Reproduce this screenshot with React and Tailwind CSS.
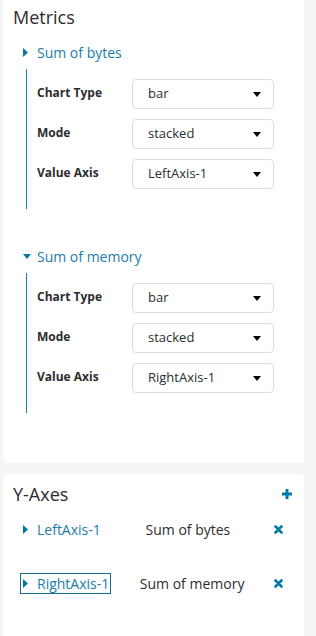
import React from "react";

const BLUE = "#0079a5";

function CaretRight() {
  return (
    <svg width="5" height="9" viewBox="0 0 5 9" className="shrink-0">
      <path d="M0 0 L5 4.5 L0 9 Z" fill={BLUE} />
    </svg>
  );
}
function CaretDown({ color = BLUE, w = 8, h = 5 }) {
  return (
    <svg width={w} height={h} viewBox="0 0 8 5" className="shrink-0">
      <path d="M0 0 L8 0 L4 5 Z" fill={color} />
    </svg>
  );
}
function PlusIcon() {
  return (
    <svg width="10" height="10" viewBox="0 0 10 10">
      <path d="M3.5 0h3v3.5H10v3H6.5V10h-3V6.5H0v-3h3.5z" fill={BLUE} />
    </svg>
  );
}
function TimesIcon() {
  return (
    <svg width="9" height="9" viewBox="0 0 9 9">
      <path d="M1.5 1.5 L7.5 7.5 M7.5 1.5 L1.5 7.5" stroke={BLUE} strokeWidth="2.6" strokeLinecap="round" />
    </svg>
  );
}

function Select({ value }) {
  return (
    <div className="w-[142px] h-[30px] border border-[#dcdcdc] rounded-[4px] bg-white flex items-center justify-between pl-[15px] pr-[12px] text-[13px] text-[#2d2d2d]">
      <span>{value}</span>
      <CaretDown color="#000" w={8} h={5} />
    </div>
  );
}

function Row({ label, value }) {
  return (
    <div className="flex items-center h-[30px]">
      <div className="w-[95px] text-[12px] font-bold text-[#2d2d2d] -mt-[2px]">{label}</div>
      <Select value={value} />
    </div>
  );
}

function Metric({ name, open, axis }) {
  return (
    <div>
      <div className="flex items-center h-[20px] pl-[20px]">
        <div className="w-[14px] flex items-center">
          {open ? <CaretDown /> : <CaretRight />}
        </div>
        <span className="text-[14px] text-[#1a7daa]">{name}</span>
      </div>
      <div className="ml-[23px] mt-[7px] border-l border-l-[#1a7daa] pl-[10px] pt-[10px] pb-[20px] flex flex-col gap-[10px]">
        <Row label="Chart Type" value="bar" />
        <Row label="Mode" value="stacked" />
        <Row label="Value Axis" value={axis} />
      </div>
    </div>
  );
}

function AxisRow({ name, metric, focused, className }) {
  return (
    <div className={"flex items-center justify-between h-[20px] pl-[18px] pr-[21px] " + className}>
      <div className={"flex items-center h-[19px] pr-[1px] " + (focused ? "outline outline-1 outline-[#1a6d94]" : "")}>
        <div className="w-[16px] flex items-center pl-[2px]">
          <CaretRight />
        </div>
        <span className="text-[14px] text-[#1a7daa]">{name}</span>
      </div>
      <span className="text-[14px] text-[#2d2d2d]">{metric}</span>
      <TimesIcon />
    </div>
  );
}

export default function App() {
  return (
    <div
      className="min-h-[636px] w-[316px] bg-[#f5f5f5] pl-[3px] pr-[12px] overflow-hidden"
      style={{ fontFamily: "'Open Sans', sans-serif" }}
    >
      <div className="bg-white rounded-b-[4px] h-[463px] pt-[5px]">
        <div className="pl-[10px] text-[18px] leading-[24px] text-[#2d2d2d]">Metrics</div>
        <div className="mt-[13px]">
          <Metric name="Sum of bytes" open={false} axis="LeftAxis-1" />
        </div>
        <div className="mt-[37px]">
          <Metric name="Sum of memory" open={true} axis="RightAxis-1" />
        </div>
      </div>
      <div className="bg-white rounded-t-[4px] mt-[11px] h-[170px] pt-[8px]">
        <div className="flex items-center justify-between pl-[10px] pr-[12px] h-[24px]">
          <span className="text-[18px] leading-[24px] text-[#2d2d2d]">Y-Axes</span>
          <PlusIcon />
        </div>
        <AxisRow name="LeftAxis-1" metric="Sum of bytes" className="mt-[13px]" />
        <AxisRow name="RightAxis-1" metric="Sum of memory" focused className="mt-[34px]" />
      </div>
    </div>
  );
}
